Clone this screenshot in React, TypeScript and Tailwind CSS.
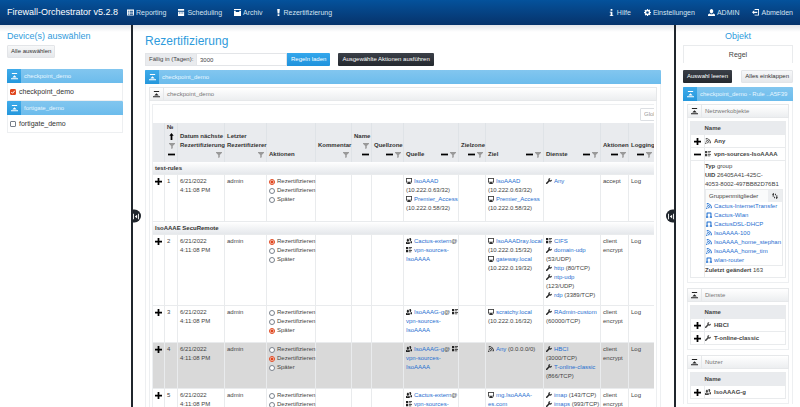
import React from "react";

const ICONS = {
  plus: "M3 0v3H0v2h3v3h2V5h3V3H5V0z",
  minus: "M0 3v2h8V3z",
  rss: "M1 0v1c3.32 0 6 2.68 6 6h1c0-3.86-3.14-7-7-7zm0 2v1c2.22 0 4 1.78 4 4h1c0-2.76-2.24-5-5-5zm0 2v1c1.11 0 2 .9 2 2h1c0-1.65-1.35-3-3-3zm0 2c-.55 0-1 .45-1 1s.45 1 1 1 1-.45 1-1-.45-1-1-1z",
  wrench:
    "M5.5 0C4.12 0 3 1.12 3 2.5c0 .32.08.62.19.91L.28 6.29c-.39.39-.39 1.05 0 1.44.2.2.46.28.72.28.26 0 .52-.09.72-.28L4.6 4.82c.28.11.58.19.91.19 1.38 0 2.5-1.12 2.5-2.5 0-.16 0-.32-.03-.47l-.97.97h-2v-2l.97-.97C5.83 0 5.66 0 5.5 0z",
  monitor: "M.5 0A.5.5 0 0 0 0 .5v5a.5.5 0 0 0 .5.5H3v1H2c-.55 0-1 .45-1 1h6c0-.55-.45-1-1-1H5V6h2.5a.5.5 0 0 0 .5-.5v-5a.5.5 0 0 0-.5-.5zM1 1h6v4H1z",
  laptop: "M1.300.7a.6.6 0 0 0-.6.6V6H0v1.500h3V6H2.100V2.100h3.800V6H5v1.500h3V6h-.7V1.300a.6.6 0 0 0-.6-.6z",
  people:
    "M5.5 0c-.51 0-.95.35-1.22.88.45.54.72 1.28.72 2.13 0 .29-.03.55-.09.81.19.11.38.19.59.19C6.330 4 7 3.100 7 2S6.330 0 5.500 0zm-3 1C1.670 1 1 1.900 1 3s.67 2 1.500 2S4 4.100 4 3s-.67-2-1.500-2zm4.750 3.160c-.43.51-1.020.82-1.690.84.27.38.44.84.44 1.340V7h2V5.340c0-.52-.31-.97-.75-1.190zm-6.500 1c-.44.22-.75.67-.75 1.190V8h5V6.350c0-.52-.31-.97-.75-1.190-.45.53-1.060.84-1.750.84s-1.300-.32-1.750-.84z",
  list: "M0 0v3h3V0zm4 0v1h4V0zm0 2v1h3V2zM0 4v3h3V4zm4 0v1h4V4zm0 2v1h3V6z",
  funnel: "M0 0v1l3 3v4l2-1V4l3-3V0z",
  up: "M4 0 1.500 3H3v5h2V3h1.500z",
  collapse: "M1 0v1h6V0zM4 2.500 1.500 5h5zM0 6v1.200h8V6z",
  sheet: "M0 .5v7h8v-7zM1 2h1v1H1zm2 0h4v1H3zM1 4h1v1H1zm2 0h4v1H3zM1 6h1v.8H1zm2 0h4v.8H3z",
  calendar: "M0 0v2h7V0zm0 3v5h7V3zm1 1h1v1H1zm2 0h1v1H3zm2 0h1v1H5z",
  box: "M0 0v1h8V0zm0 2v6h8V2H6v1.500H2V2z",
  warn: "M2.500 0 3 5h2l.5-5zM3 6v2h2V6z",
  info: "M3 0h2v2H3zM2 3h3v4h1v1H2V7h1V4H2z",
  cog: "M3.500 0l-.5 1.190-.5.21L1.300.9l-.7.7.5 1.200-.21.5L0 3.500v1l1.190.5.21.5-.5 1.200.7.7 1.200-.5.5.21L3.500 8h1l.5-1.190.5-.21 1.200.5.7-.7-.5-1.200.21-.5L8 4.500v-1l-1.190-.5-.21-.5.5-1.200-.7-.7-1.200.5-.5-.21L4.500 0zM4 2.500a1.500 1.500 0 1 1 0 3 1.500 1.500 0 0 1 0-3z",
  person: "M4 0C2.900 0 2 1.120 2 2.500S2.900 5 4 5s2-1.120 2-2.500S5.100 0 4 0zM1.910 5C.85 5.050 0 5.920 0 7v1h8V7c0-1.080-.84-1.950-1.910-2-.54.61-1.280 1-2.090 1-.81 0-1.550-.39-2.090-1z",
  logout: "M3 0v1h4v5.500H3v1h5V0zM2.500 1.500 0 3.750 2.500 6V4.500H6V3H2.500z",
  refresh: "M2 0 0 2h1v3h1V2h1zM6 8l2-2H7V3H6v3H5zM3 5v2h1V5zM4 1v2h1V1z",
  split: "M0 0v8h1.200V0zm6.800 0v8H8V0zM5.500 1.500 2.500 4l3 2.500z",
};
type IconName = keyof typeof ICONS;

function Icon({ name, className = "size-[6px]" }: { name: IconName; className?: string }) {
  return (
    <svg viewBox="0 0 8 8" aria-hidden="true" className={`inline-block shrink-0 fill-current ${className}`}>
      <path fillRule="evenodd" d={ICONS[name]} />
    </svg>
  );
}

function NavLink({ icon, label }: { icon: IconName; label: string }) {
  return (
    <a href="#" className="flex items-center gap-[2px] text-[7px] text-[#d5e2f0]">
      <Icon name={icon} className="size-[7px] text-white" />
      {label}
    </a>
  );
}

function Panel({ title, tone, children }: { title: string; tone: "blue" | "gray"; children: React.ReactNode }) {
  const blue = tone === "blue";
  return (
    <section>
      <h3
        className={`flex h-[14px] items-center overflow-hidden whitespace-nowrap text-[6px] ${
          blue ? "rounded-t-[1px] bg-linear-to-b from-[#82c6ef] to-[#6cbcec] text-[#e8f6ff]" : "border border-[#e6e8ea] bg-linear-to-b from-white to-[#eceef0] text-[#777]"
        }`}
      >
        <button
          type="button"
          aria-label={`${title} ein- oder ausklappen`}
          className={`mr-[3px] grid h-full w-[14px] shrink-0 place-items-center ${blue ? "bg-linear-to-b from-[#3fabea] to-[#2497dc] text-white" : "border-r border-[#e6e8ea] text-[#222]"}`}
        >
          <Icon name="collapse" className="size-[7px]" />
        </button>
        {title}
      </h3>
      {children}
    </section>
  );
}

function Splitter({ side }: { side: "left" | "right" }) {
  return (
    <div className="relative z-10 w-[2px] shrink-0 bg-[#20262d]">
      <button
        type="button"
        aria-label="Seitenleiste umschalten"
        className={`absolute top-1/2 grid h-[13px] w-[10px] -translate-y-1/2 place-items-center bg-[#20262d] text-white ${
          side === "left" ? "left-0 rounded-r-full" : "right-0 rounded-l-full"
        }`}
      >
        <Icon name="split" className="size-[6px]" />
      </button>
    </div>
  );
}

function Device({ name, checked }: { name: string; checked: boolean }) {
  return (
    <Panel title={name} tone="blue">
      <label className="flex h-[18px] items-center gap-[3px] border border-t-0 border-[#edeff1] px-[2px] text-[7px] text-[#333]">
        <span className="relative grid size-[6px]">
          <input type="checkbox" defaultChecked={checked} className="peer size-[6px] appearance-none rounded-[1px] border border-[#777f8a] bg-white checked:border-[#e0451c] checked:bg-[#e0451c]" />
          <svg viewBox="0 0 6 6" aria-hidden="true" className="pointer-events-none absolute inset-0 hidden size-[6px] fill-none stroke-white peer-checked:block">
            <path d="M1.300 3l1.300 1.300 2.200-2.600" />
          </svg>
        </span>
        {name}
      </label>
    </Panel>
  );
}

type Ref = { icon?: IconName; name?: string; text?: string; end?: IconName };

function Lines({ items }: { items: Ref[] }) {
  return (
    <>
      {items.map((r, i) => (
        <div key={i} className="whitespace-nowrap">
          {r.icon && <Icon name={r.icon} className="mr-[2px] size-[6px] text-[#222]" />}
          {r.name && (
            <a href="#" className="text-[#1f6fd0]">
              {r.name}
            </a>
          )}
          {r.text}
          {r.end && <Icon name={r.end} className="ml-[2px] size-[6px] text-[#222]" />}
        </div>
      ))}
    </>
  );
}

const ACTIONS = ["Rezertifizieren", "Dezertifizieren", "Später"];

type Rule = { id: number; action: number; height: string; active?: boolean; source: Ref[]; target: Ref[]; services: Ref[]; verdict: string };

const FIRST: Rule[] = [
  {
    id: 1,
    action: 0,
    height: "h-[47px]",
    source: [{ icon: "monitor", name: "IsoAAAD" }, { text: "(10.222.0.63/32)" }, { icon: "monitor", name: "Premier_Access" }, { text: "(10.222.0.58/32)" }],
    target: [{ icon: "monitor", name: "IsoAAAD" }, { text: "(10.222.0.63/32)" }, { icon: "monitor", name: "Premier_Access" }, { text: "(10.222.0.58/32)" }],
    services: [{ icon: "wrench", name: "Any" }],
    verdict: "accept",
  },
];

const SECOND: Rule[] = [
  {
    id: 2,
    action: 0,
    height: "h-[71px]",
    source: [{ icon: "people", name: "Cactus-extern", text: "@" }, { icon: "list", name: "vpn-sources-" }, { name: "IsoAAAA" }],
    target: [{ icon: "monitor", name: "IsoAAADray.local" }, { text: "(10.222.0.15/32)" }, { icon: "monitor", name: "gateway.local" }, { text: "(10.222.0.19/32)" }],
    services: [
      { icon: "list", name: "CIFS" },
      { icon: "wrench", name: "domain-udp" },
      { text: "(53/UDP)" },
      { icon: "wrench", name: "http", text: " (80/TCP)" },
      { icon: "wrench", name: "ntp-udp" },
      { text: "(123/UDP)" },
      { icon: "wrench", name: "rdp", text: " (3389/TCP)" },
    ],
    verdict: "client encrypt",
  },
  {
    id: 3,
    action: 2,
    height: "h-[37px]",
    source: [{ icon: "people", name: "IsoAAAG-g", text: "@", end: "list" }, { name: "vpn-sources-" }, { name: "IsoAAAA" }],
    target: [{ icon: "monitor", name: "scratchy.local" }, { text: "(10.222.0.16/32)" }],
    services: [{ icon: "wrench", name: "RAdmin-custom" }, { text: "(60000/TCP)" }],
    verdict: "client encrypt",
  },
  {
    id: 4,
    action: 1,
    height: "h-[46px]",
    active: true,
    source: [{ icon: "people", name: "IsoAAAG-g", text: "@", end: "list" }, { name: "vpn-sources-" }, { name: "IsoAAAA" }],
    target: [{ icon: "rss", name: "Any", text: " (0.0.0.0/0)" }],
    services: [{ icon: "wrench", name: "HBCI" }, { text: "(3000/TCP)" }, { icon: "wrench", name: "T-online-classic" }, { text: "(866/TCP)" }],
    verdict: "client encrypt",
  },
  {
    id: 5,
    action: -1,
    height: "h-[46px]",
    source: [{ icon: "people", name: "Cactus-extern", text: "@" }, { icon: "list", name: "vpn-sources-" }, { name: "IsoAAAA" }],
    target: [{ icon: "monitor", name: "mg.IsoAAAA-" }, { name: "es.com" }],
    services: [{ icon: "wrench", name: "imap", text: " (143/TCP)" }, { icon: "wrench", name: "imaps", text: " (993/TCP)" }],
    verdict: "client encrypt",
  },
];

const CELL = "border-r border-b border-[#e9ebed] px-[2px] pt-[2px] align-top";

function RuleRow({ rule }: { rule: Rule }) {
  return (
    <tr className={`${rule.height} ${rule.active ? "bg-[#d9d9d9]" : "bg-white"}`}>
      <td className={CELL}>
        <button type="button" aria-label="Details" className="flex h-[9px] items-center text-black">
          <Icon name="plus" className="size-[7px]" />
        </button>
      </td>
      <td className={CELL}>{rule.id}</td>
      <td className={CELL}>6/21/2022 4:11:08 PM</td>
      <td className={CELL}>admin</td>
      <td className={CELL}>
        {ACTIONS.map((a, i) => (
          <label key={a} className="flex h-[9px] items-center gap-[2px] whitespace-nowrap">
            <input
              type="radio"
              name={`rule-${rule.id}`}
              defaultChecked={i === rule.action}
              className="size-[6px] shrink-0 appearance-none rounded-full border border-[#7a828c] bg-white checked:border-[#e0451c] checked:bg-[radial-gradient(circle,#e0451c_1px,#fff_2px)]"
            />
            {a}
          </label>
        ))}
      </td>
      <td className={CELL} />
      <td className={CELL} />
      <td className={CELL} />
      <td className={CELL}>
        <Lines items={rule.source} />
      </td>
      <td className={CELL} />
      <td className={CELL}>
        <Lines items={rule.target} />
      </td>
      <td className={CELL}>
        <Lines items={rule.services} />
      </td>
      <td className={CELL}>{rule.verdict}</td>
      <td className={CELL}>Log</td>
    </tr>
  );
}

function GroupRow({ title }: { title: string }) {
  return (
    <tr className="h-[13px] bg-linear-to-b from-white to-[#e3e6ea]">
      <th colSpan={14} scope="rowgroup" className="border-b border-[#e9ebed] px-[2px] text-left align-middle text-[#333]">
        {title}
      </th>
    </tr>
  );
}

type Column = { lines?: string[]; width: string; tools?: "filter" | "both" | "stack" | "inline" | "sort" };

const COLUMNS: Column[] = [
  { width: "w-[12px]" },
  { lines: ["№"], width: "w-[13px]", tools: "sort" },
  { lines: ["Datum nächste", "Rezertifizierung"], width: "w-[47px]", tools: "filter" },
  { lines: ["Letzter", "Rezertifizierer"], width: "w-[42px]", tools: "filter" },
  { lines: ["Aktionen"], width: "w-[49px]" },
  { lines: ["Kommentar"], width: "w-[36px]", tools: "filter" },
  { lines: ["Name"], width: "w-[20px]", tools: "stack" },
  { lines: ["Quellzone"], width: "w-[32px]", tools: "both" },
  { lines: ["Quelle"], width: "w-[55px]", tools: "inline" },
  { lines: ["Zielzone"], width: "w-[27px]", tools: "both" },
  { lines: ["Ziel"], width: "w-[58px]", tools: "inline" },
  { lines: ["Dienste"], width: "w-[57px]", tools: "inline" },
  { lines: ["Aktionen"], width: "w-[28px]", tools: "both" },
  { lines: ["Logging"], width: "w-[26px]", tools: "both" },
];

function Tool({ name }: { name: "funnel" | "minus" | "up" }) {
  return <Icon name={name} className={name === "funnel" ? "size-[6px] text-[#999]" : "size-[7px] text-black"} />;
}

function ColumnHead({ col }: { col: Column }) {
  const stacked = col.tools === "sort" || col.tools === "stack";
  return (
    <th scope="col" className={`${col.width} border-r border-[#dfe3e7] px-[2px] pb-[3px] text-left align-bottom whitespace-nowrap`}>
      {col.tools === "inline" ? (
        <div className="flex items-center gap-[2px]">
          <span className="mr-auto">{col.lines}</span>
          <Tool name="minus" />
          <Tool name="funnel" />
        </div>
      ) : (
        <>
          {col.lines?.map((l) => (
            <div key={l}>{l}</div>
          ))}
          {col.tools && (
            <div className={`flex items-end ${stacked ? "flex-col" : "justify-end gap-[2px]"}`}>
              {col.tools === "sort" && (
                <span className="flex h-[9px] items-center">
                  <Tool name="up" />
                </span>
              )}
              {col.tools === "both" && (
                <span className="flex h-[9px] items-center">
                  <Tool name="minus" />
                </span>
              )}
              <span className="flex h-[9px] items-center">
                <Tool name="funnel" />
              </span>
              {stacked && (
                <span className="flex h-[9px] items-center">
                  <Tool name="minus" />
                </span>
              )}
            </div>
          )}
        </>
      )}
    </th>
  );
}

const MEMBERS: { icon: IconName; name: string }[] = [
  { icon: "rss", name: "Cactus-InternetTransfer" },
  { icon: "laptop", name: "Cactus-Wlan" },
  { icon: "laptop", name: "CactusDSL-DHCP" },
  { icon: "rss", name: "IsoAAAA-100" },
  { icon: "rss", name: "IsoAAAA_home_stephan" },
  { icon: "rss", name: "IsoAAAA_home_tim" },
  { icon: "laptop", name: "wlan-router" },
];

type Obj = { icon: IconName; name: string; open?: boolean; detail?: React.ReactNode };

function ObjectTable({ rows }: { rows: Obj[] }) {
  return (
    <table className="w-full table-fixed border-collapse border border-[#e9ebed] text-[6px] leading-[9px]">
      <thead>
        <tr className="h-[13px] bg-[#e9ebee]">
          <th className="w-[14px]" />
          <th scope="col" className="text-left">
            Name
          </th>
        </tr>
      </thead>
      <tbody>
        {rows.map((o) => (
          <React.Fragment key={o.name}>
            <tr className="h-[13px] border-t border-[#e9ebed]">
              <td className="border-r border-[#e9ebed]">
                <button type="button" aria-label="Details" className="mx-auto flex text-black">
                  <Icon name={o.open ? "minus" : "plus"} className="size-[7px]" />
                </button>
              </td>
              <th scope="row" className="text-left whitespace-nowrap">
                <Icon name={o.icon} className="mr-[3px] size-[6px]" />
                {o.name}
              </th>
            </tr>
            {o.detail && (
              <tr className="border-t border-[#e9ebed]">
                <td className="border-r border-[#e9ebed]" />
                <td className="pt-[1px] pb-[2px]">{o.detail}</td>
              </tr>
            )}
          </React.Fragment>
        ))}
      </tbody>
    </table>
  );
}

const GROUP_DETAIL = (
  <>
    <p>
      <b>Typ</b> group
    </p>
    <p>
      <b>UID</b> 26405A41-425C-
      <br />
      4053-8002-497BB82D76B1
    </p>
    <div className="mr-[2px] border border-[#e9ebed]">
      <div className="flex h-[12px] items-center justify-between bg-[#fafbfb] pl-[3px]">
        Gruppenmitglieder
        <button type="button" aria-label="Aktualisieren" className="grid h-full w-[14px] place-items-center bg-[#eceef0] text-black">
          <Icon name="refresh" />
        </button>
      </div>
      <ul className="leading-[9px]">
        {MEMBERS.map((m) => (
          <li key={m.name} className="whitespace-nowrap">
            <a href="#" className="text-[#1f6fd0]">
              <Icon name={m.icon} className="mr-[2px] size-[6px]" />
              {m.name}
            </a>
          </li>
        ))}
      </ul>
    </div>
    <p>
      <b>Zuletzt geändert</b> 163
    </p>
  </>
);

const SHADE = "bg-[linear-gradient(#e3e5e9,#ffffff_7px)]";
const DARK = "h-[13px] rounded-[1px] bg-linear-to-b from-[#3b4048] to-[#25292f] px-[4px] text-[6px] whitespace-nowrap text-white";
const LIGHT = "h-[13px] rounded-[1px] border border-[#e3e5e8] bg-linear-to-b from-[#f7f8f9] to-[#e6e8eb] px-[3px] text-[6px] whitespace-nowrap text-[#333]";

export default function App() {
  return (
    <div className="flex h-screen flex-col overflow-hidden bg-white font-['Liberation_Sans',Arial,sans-serif] text-[6px] leading-[9px] text-[#444]">
      <header className="flex h-[25px] shrink-0 items-center justify-between bg-linear-to-b from-[#04529c] to-[#06336b] px-[7px]">
        <div className="flex items-center gap-[9px]">
          <a href="#" className="text-[9px] whitespace-nowrap text-white">
            Firewall-Orchestrator v5.2.8
          </a>
          <nav className="flex items-center gap-[12px]">
            <NavLink icon="sheet" label="Reporting" />
            <NavLink icon="calendar" label="Scheduling" />
            <NavLink icon="box" label="Archiv" />
            <NavLink icon="warn" label="Rezertifizierung" />
          </nav>
        </div>
        <nav className="flex items-center gap-[13px]">
          <NavLink icon="info" label="Hilfe" />
          <NavLink icon="cog" label="Einstellungen" />
          <NavLink icon="person" label="ADMIN" />
          <NavLink icon="logout" label="Abmelden" />
        </nav>
      </header>

      <div className="flex min-h-0 flex-1">
        <aside className={`w-[131px] shrink-0 pt-[5px] pr-[8px] pl-[7px] ${SHADE}`}>
          <h2 className="text-[9px] leading-[12px] text-[#2f9bdc]">Device(s) auswählen</h2>
          <button type="button" className={`mt-[3px] mb-[11px] ${LIGHT}`}>
            Alle auswählen
          </button>
          <Device name="checkpoint_demo" checked />
          <Device name="fortigate_demo" checked={false} />
        </aside>

        <Splitter side="left" />

        <main className={`min-w-0 flex-1 overflow-hidden pt-[8px] pr-[13px] pl-[12px] ${SHADE}`}>
          <h1 className="text-[12px] leading-[16px] text-[#2f9bdc]">Rezertifizierung</h1>
          <form className="mt-[4px] mb-[4px] flex" onSubmit={(e) => e.preventDefault()}>
            <label htmlFor="due" className="flex h-[13px] w-[52px] items-center border border-[#e3e5e8] bg-[#e9ebee] pl-[3px]">
              Fällig in (Tagen):
            </label>
            <input id="due" type="text" defaultValue="3000" className="h-[13px] w-[90px] border border-l-0 border-[#e3e5e8] px-[3px] text-[6px]" />
            <button type="submit" className="h-[13px] rounded-r-[1px] bg-linear-to-b from-[#34a7ec] to-[#1f92dc] px-[4px] text-white">
              Regeln laden
            </button>
            <button type="button" className={`ml-[8px] ${DARK}`}>
              Ausgewählte Aktionen ausführen
            </button>
          </form>

          <Panel title="checkpoint_demo" tone="blue">
            <div className="border-x border-[#edeff1] px-[3px] pt-[3px]">
              <Panel title="checkpoint_demo" tone="gray">
                <div className="border-x border-[#edeff1] px-[2px] pt-[3px]">
                  <div className="overflow-hidden border-t border-l border-[#edeff1]">
                    <div className="flex h-[18px] items-center justify-end">
                      <input type="search" aria-label="Globale Suche" placeholder="Globale Suche" className="-mr-[46px] h-[13px] w-[60px] shrink-0 rounded-[1px] border border-[#dcdfe3] px-[3px] text-[6px] placeholder:text-[#999]" />
                    </div>
                    <table className="w-full min-w-[502px] table-fixed border-separate border-spacing-0 text-[6px] leading-[9px]">
                      <thead>
                        <tr className="h-[39px] bg-[#e9ebee] text-[#333]">
                          {COLUMNS.map((c, i) => (
                            <ColumnHead key={i} col={c} />
                          ))}
                        </tr>
                      </thead>
                      <tbody>
                        <GroupRow title="test-rules" />
                        {FIRST.map((r) => (
                          <RuleRow key={r.id} rule={r} />
                        ))}
                        <GroupRow title="IsoAAAE SecuRemote" />
                        {SECOND.map((r) => (
                          <RuleRow key={r.id} rule={r} />
                        ))}
                      </tbody>
                    </table>
                  </div>
                </div>
              </Panel>
            </div>
          </Panel>
        </main>

        <Splitter side="right" />

        <aside className={`w-[124px] shrink-0 overflow-hidden pt-[5px] pr-[7px] pl-[7px] ${SHADE}`}>
          <h2 className="text-center text-[9px] leading-[12px] text-[#2f9bdc]">Objekt</h2>
          <button type="button" className="mt-[3px] h-[18px] w-full border border-b-0 border-[#e9ebed] text-[7px]">
            Regel
          </button>
          <div className="mt-[7px] mb-[4px] flex justify-between">
            <button type="button" className={DARK}>
              Auswahl leeren
            </button>
            <button type="button" className={LIGHT}>
              Alles einklappen
            </button>
          </div>
          <Panel title="checkpoint_demo - Rule ..A5F39" tone="blue">
            <div className="flex flex-col gap-[5px] border-x border-[#edeff1] px-[3px] pt-[3px]">
              <Panel title="Netzwerkobjekte" tone="gray">
                <div className="border border-t-0 border-[#edeff1] px-[2px] pt-[3px] pb-[4px]">
                  <ObjectTable
                    rows={[
                      { icon: "rss", name: "Any" },
                      { icon: "list", name: "vpn-sources-IsoAAAA", open: true, detail: GROUP_DETAIL },
                    ]}
                  />
                </div>
              </Panel>
              <Panel title="Dienste" tone="gray">
                <div className="border border-t-0 border-[#edeff1] px-[2px] pt-[3px] pb-[4px]">
                  <ObjectTable
                    rows={[
                      { icon: "wrench", name: "HBCI" },
                      { icon: "wrench", name: "T-online-classic" },
                    ]}
                  />
                </div>
              </Panel>
              <Panel title="Nutzer" tone="gray">
                <div className="border border-t-0 border-[#edeff1] px-[2px] pt-[3px] pb-[4px]">
                  <ObjectTable rows={[{ icon: "people", name: "IsoAAAG-g" }]} />
                </div>
              </Panel>
            </div>
          </Panel>
        </aside>
      </div>
    </div>
  );
}
